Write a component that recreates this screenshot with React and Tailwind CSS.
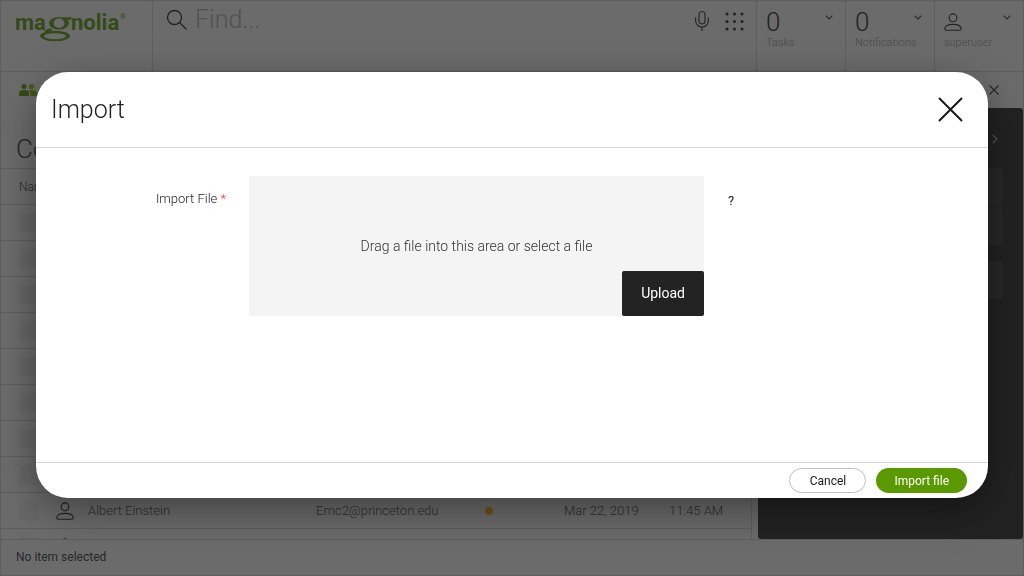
import React from "react";

function Logo() {
  return (
    <svg viewBox="0 0 112 32" className="h-8 w-28" role="img" aria-label="magnolia" fill="#5a9a00">
      <text x="-1" y="19" fontFamily="Roboto, sans-serif" fontWeight="700" fontSize="22">ma</text>
      <g fillRule="evenodd">
        <path d="M33 12.200a10 6.300 0 1 1 20 0a10 6.300 0 1 1-20 0zM37.500 12.200a5.500 4.700 0 1 0 11 0a5.500 4.700 0 1 0-11 0z" />
        <path d="M24 25a15 5.200 0 1 1 30 0a15 5.200 0 1 1-30 0zM28 25.200a11 3 0 1 0 22 0a11 3 0 1 0-22 0z" />
      </g>
      <path d="M46 6.200h9.500v2.600H50zM33 17.500c-4 1.500-5.500 3-3 4.500l8-.5c-3-1-3.500-2-1-3.500z" />
      <text x="55" y="19" fontFamily="Roboto, sans-serif" fontWeight="700" fontSize="22">nolia</text>
      <text x="104" y="8" fontFamily="Roboto, sans-serif" fontWeight="500" fontSize="7">®</text>
    </svg>
  );
}

function SearchIcon() {
  return (
    <svg viewBox="0 0 22 22" className="h-[22px] w-[22px]" fill="none" stroke="#232323" strokeWidth="1.3">
      <circle cx="8.5" cy="8.5" r="7" />
      <path d="M13.5 13.5 20.5 20.5" />
    </svg>
  );
}

function MicIcon() {
  return (
    <svg viewBox="0 0 16 22" className="h-[22px] w-4" fill="none" stroke="#333" strokeWidth="1.2">
      <rect x="5" y="1.5" width="6" height="12.5" rx="3" />
      <path d="M1.6 7.5v3.2a6.4 6.4 0 0 0 12.8 0V7.5M8 17v4" />
    </svg>
  );
}

function AppsIcon() {
  const spots = [2, 9.5, 17];
  return (
    <svg viewBox="0 0 19 19" className="h-[19px] w-[19px]" fill="#232323">
      {spots.map((y) => spots.map((x) => <circle key={`${x}-${y}`} cx={x} cy={y} r="1.5" />))}
    </svg>
  );
}

function PersonIcon() {
  return (
    <svg viewBox="0 0 18 18" className="h-[18px] w-[18px]" fill="none" stroke="#232323" strokeWidth="1.1">
      <circle cx="9" cy="4.8" r="3.900" />
      <path d="M2 17.200c-.8 0-1.200-.4-1.200-1.200 0-3.200 2.700-4.600 8.200-4.600s8.200 1.400 8.200 4.600c0 .8-.4 1.200-1.200 1.200z" strokeLinejoin="round" />
    </svg>
  );
}

function Chevron() {
  return (
    <svg viewBox="0 0 8 5" className="h-[5px] w-2" fill="none" stroke="#333" strokeWidth="1.1">
      <path d="M.6.6 4 4 7.400.6" />
    </svg>
  );
}

function HeaderCard({ children, label }) {
  return (
    <button type="button" className="flex w-[88px] items-start justify-between rounded-[3px] bg-white pt-[7px] pr-3 pl-[9px] text-left">
      <span className="flex flex-col">
        <span className="flex h-7 items-center text-[26px] leading-7 text-[#232323]">{children}</span>
        <span className="text-[11px] leading-[14px] text-[#a0a0a0]">{label}</span>
      </span>
      <span className="-ml-2 pt-[7px]"><Chevron /></span>
    </button>
  );
}

function Check({ label }) {
  return (
    <input type="checkbox" aria-label={label} className="block h-5 w-5 appearance-none bg-[#f1f1f1]" />
  );
}

const rows = [
  {}, {}, {}, {}, {}, {}, {}, {},
  { name: "Albert Einstein", email: "Emc2@princeton.edu", date: "Mar 22, 2019", time: "11:45 AM" },
  { person: true },
];

function Workspace() {
  return (
    <div className="flex h-screen flex-col gap-px overflow-hidden bg-[#d8d8d8] p-px">
      <header className="flex h-[70px] shrink-0 gap-px">
        <a href="#home" className="w-[151px] rounded-[3px] bg-white pt-2.5 pl-[15px]"><Logo /></a>
        <div className="flex flex-1 items-start rounded-[3px] bg-white pt-2 pr-3 pl-[13px]">
          <SearchIcon />
          <input aria-label="Find" placeholder="Find..." className="ml-[7px] h-5 min-w-0 flex-1 bg-transparent text-[25px] leading-5 font-light outline-none placeholder:text-[#b0b0b0]" />
          <button type="button" aria-label="Voice search" className="pt-px"><MicIcon /></button>
          <button type="button" aria-label="Apps" className="ml-[15px] pt-[3px]"><AppsIcon /></button>
        </div>
        <HeaderCard label="Tasks">0</HeaderCard>
        <HeaderCard label="Notifications">0</HeaderCard>
        <HeaderCard label="superuser"><PersonIcon /></HeaderCard>
      </header>

      <div className="flex min-h-0 flex-1 flex-col rounded-[3px] bg-white">
        <div className="flex h-9 shrink-0 items-center justify-between pr-6 pl-[18px]">
          <svg viewBox="0 0 18 12" className="h-3 w-[18px]">
            <g fill="#5a9a00"><circle cx="5" cy="2.600" r="2.500" /><path d="M0 12V9c0-2 2-3 5-3s5 1 5 3v3z" /></g>
            <g fill="#86c800"><circle cx="12.500" cy="2.600" r="2.500" /><path d="M11 12V9c0-1.200-.5-2.200-1.200-2.800C14.500 5.400 18 6.500 18 9v3z" /></g>
          </svg>
          <button type="button" aria-label="Close app">
            <svg viewBox="0 0 10 10" className="h-2.5 w-2.5" stroke="#333" strokeWidth="1.1"><path d="M.5.500 9.500 9.500M9.500.500.500 9.500" /></svg>
          </button>
        </div>
        <div className="flex min-h-0 flex-1 gap-1.5">
          <main className="min-w-0 flex-1 overflow-hidden border-r border-[#d8d8d8]">
            <h1 className="h-[61px] border-b border-[#d8d8d8] pt-[25px] pl-[15px] text-[26px] leading-8 text-[#333]">Contacts</h1>
            <table className="w-full table-fixed border-separate border-spacing-0 text-left [&_td]:border-b [&_td]:border-[#d8d8d8] [&_th]:border-b [&_th]:border-[#d8d8d8]">
              <colgroup>
                <col className="w-[50px]" /><col className="w-[37px]" /><col className="w-[228px]" /><col />
                <col className="w-[84px]" /><col className="w-[105px]" /><col className="w-[82px]" />
              </colgroup>
              <thead>
                <tr className="h-9">
                  <th colSpan={7} className="p-0 pl-[18px] text-[12px] font-light text-[#333]">Name</th>
                </tr>
              </thead>
              <tbody className="text-[13px] text-[#444]">
                {rows.map((row, i) => (
                  <tr key={i} className="h-9">
                    <td className="p-0 pl-[18px]"><Check label={row.name || `Row ${i + 1}`} /></td>
                    <td className="p-0 pl-[5px]">{(row.name || row.person) && <PersonIcon />}</td>
                    <td className="p-0">{row.name}</td>
                    <td className="p-0">{row.email}</td>
                    <td className="p-0 pl-[5px]">{row.name && <span className="block h-2 w-2 rounded-full bg-[#ffb400]" />}</td>
                    <td className="p-0">{row.date}</td>
                    <td className="p-0">{row.time}</td>
                  </tr>
                ))}
              </tbody>
            </table>
          </main>
          <aside className="flex w-[265px] flex-col rounded-[3px] bg-[#232323] px-5 pt-[26px]">
            <button type="button" aria-label="Collapse actions" className="mb-6 self-end pr-[5px]">
              <svg viewBox="0 0 6 10" className="h-2.5 w-1.5" fill="none" stroke="#ccc" strokeWidth="1.1"><path d="M.8.800 5 5 .8 9.200" /></svg>
            </button>
            <div className="h-[38px] rounded-[3px] bg-[#343434]" />
            <div className="mt-px h-[38px] rounded-[3px] bg-[#343434]" />
            <div className="mt-4 h-[38px] rounded-[3px] bg-[#343434]" />
          </aside>
        </div>
      </div>

      <footer className="flex h-[35px] shrink-0 items-center rounded-[3px] bg-white pb-px pl-[15px] text-[12px] font-normal text-[#333]">
        No item selected
      </footer>
    </div>
  );
}

function ImportDialog() {
  return (
    <div className="fixed inset-0 flex bg-[#232323]/67 px-9 pt-[72px] pb-[78px]">
      <form
        role="dialog"
        aria-labelledby="dialog-title"
        onSubmit={(e) => e.preventDefault()}
        className="flex flex-1 flex-col overflow-hidden rounded-[32px] bg-white shadow-[0_12px_40px_rgba(0,0,0,0.4)]"
      >
        <header className="flex h-19 shrink-0 items-center justify-between border-b border-[#d8d8d8] pr-[25px] pl-[15px]">
          <h2 id="dialog-title" className="text-[25px] leading-8 text-[#232323]">Import</h2>
          <button type="button" aria-label="Close">
            <svg viewBox="0 0 25 25" className="h-[25px] w-[25px]" stroke="#191919" strokeWidth="2"><path d="M1 1 24 24M24 1 1 24" /></svg>
          </button>
        </header>
        <div className="grid flex-1 grid-cols-[190px_minmax(0,455px)_1fr] content-start gap-x-[23px] pt-7">
          <label htmlFor="upload" className="pt-[15px] text-right text-[13px] leading-4 text-[#232323]">
            Import File <span className="text-[#ff3b30]">*</span>
          </label>
          <div className="grid h-[140px] bg-[#f4f4f4]">
            <p className="col-start-1 row-start-1 place-self-center text-[14px] leading-4 text-[#333]">
              Drag a file into this area or select a file
            </p>
            <button id="upload" type="button" className="col-start-1 row-start-1 h-[45px] self-end justify-self-end rounded-[2px] bg-[#232323] px-[19px] text-[14px] font-normal text-white">
              Upload
            </button>
          </div>
          <button type="button" aria-label="Help" className="mt-4 h-[18px] justify-self-start px-px text-[13px] leading-[18px] font-normal text-[#191919]">?</button>
        </div>
        <footer className="flex h-9 shrink-0 items-center justify-end gap-2.5 border-t border-[#d8d8d8] pr-[21px] text-[12px] font-normal">
          <button type="button" className="h-[25px] min-w-[77px] rounded-full border border-[#bfbfbf] px-[18px] text-[#191919]">Cancel</button>
          <button type="submit" className="h-[25px] min-w-[77px] rounded-full bg-[#5a9a00] px-[18px] text-white">Import file</button>
        </footer>
      </form>
    </div>
  );
}

export default function App() {
  return (
    <div className="font-[Roboto,sans-serif] font-light">
      <Workspace />
      <ImportDialog />
    </div>
  );
}
